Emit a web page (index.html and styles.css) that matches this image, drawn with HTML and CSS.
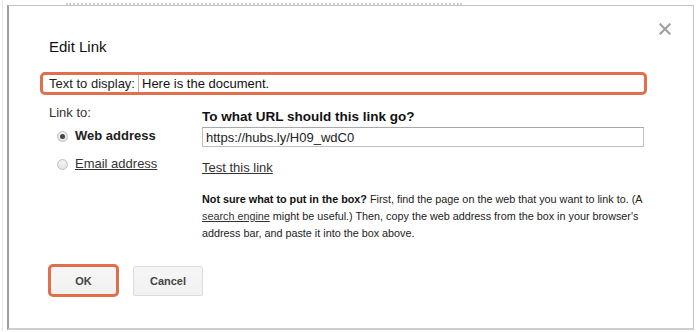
FILE: index.html
```html
<!DOCTYPE html>
<html>
<head>
<meta charset="utf-8">
<link rel="stylesheet" href="styles.css">
</head>
<body>
<div class="page">
  <div class="peek"><span class="peek-line"></span></div>
  <div class="dialog">
    <span class="close"><svg width="12" height="12" viewBox="0 0 12 12"><path d="M1.5 1.5 L10.5 10.5 M10.5 1.5 L1.5 10.5" stroke="#a0a0a0" stroke-width="2.2" stroke-linecap="square"/></svg></span>
    <div class="title">Edit Link</div>
    <div class="display-row">
      <span class="display-label">Text to display:</span>
      <span class="display-input">Here is the document.</span>
    </div>
    <div class="link-body">
      <div class="left-col">
        <div class="linkto">Link to:</div>
        <div class="radio-row first"><span class="radio checked"></span><span class="opt-bold">Web address</span></div>
        <div class="radio-row"><span class="radio"></span><span class="opt-link">Email address</span></div>
      </div>
      <div class="right-col">
        <div class="heading">To what URL should this link go?</div>
        <div class="url-input">https://hubs.ly/H09_wdC0</div>
        <div class="test"><span class="ulink">Test this link</span></div>
        <p class="help"><b>Not sure what to put in the box?</b> First, find the page on the web that you want to link to. (A<br><span class="ulink">search engine</span> might be useful.) Then, copy the web address from the box in your browser's<br>address bar, and paste it into the box above.</p>
      </div>
    </div>
    <div class="buttons">
      <span class="btn ok">OK</span>
      <span class="btn cancel">Cancel</span>
    </div>
  </div>
</div>
</body>
</html>
```

FILE: styles.css
```css
html, body {
  margin: 0;
  padding: 0;
  background: #fff;
}
body {
  font-family: "Liberation Sans", Arial, sans-serif;
  color: #222;
  width: 698px;
  height: 332px;
  overflow: hidden;
}
.page {
  margin-left: 2px;
  border-left: 1px solid #e4e4e4;
  padding-left: 4px;
  height: 331px;
}
.peek {
  height: 5px;
  padding-left: 59px;
  box-sizing: border-box;
  padding-top: 3px;
}
.peek-line {
  display: block;
  width: 396px;
  border-bottom: 2px dotted #d2d2d2;
}
.dialog {
  position: relative;
  box-sizing: border-box;
  width: 687px;
  height: 325px;
  border: 1px solid #c4c4c4;
  border-left: 2px solid #9f9f9f;
  border-bottom: 2px solid #cfcfcf;
  background: #fff;
  padding: 32px 0 0 40px;
}
.close {
  position: absolute;
  top: 17px;
  right: 22px;
  width: 12px;
  height: 12px;
  display: block;
}
.close svg { display: block; }
.title {
  font-size: 15px;
  line-height: 18px;
  color: #111;
}
.display-row {
  display: flex;
  align-items: center;
  box-sizing: border-box;
  margin: 16px 0 0 -9px;
  width: 607px;
  height: 23px;
  border: 3px solid #e0704b;
  border-radius: 5px;
  padding-left: 6px;
  font-size: 13px;
  line-height: 17px;
}
.display-label {
  color: #222;
  width: 89px;
  flex: none;
}
.display-input {
  flex: 1;
  border-left: 1px solid #b9b9b9;
  padding-left: 3px;
  height: 17px;
  color: #111;
}
.link-body {
  display: flex;
  margin-top: 10px;
  font-size: 13px;
  line-height: 16px;
}
.left-col {
  width: 153px;
  flex: none;
}
.linkto {
  color: #333;
}
.radio-row {
  display: flex;
  align-items: center;
  height: 16px;
  margin-top: 12px;
  padding-left: 8px;
}
.radio-row.first {
  margin-top: 7px;
}
.radio {
  box-sizing: border-box;
  width: 11px;
  height: 11px;
  border-radius: 50%;
  border: 1px solid #c2c2c2;
  background: radial-gradient(circle at 50% 35%, #f4f4f4, #dcdcdc);
  margin-right: 7px;
  position: relative;
  flex: none;
}
.radio.checked::after {
  content: "";
  position: absolute;
  left: 2px;
  top: 2px;
  width: 5px;
  height: 5px;
  border-radius: 50%;
  background: #444;
}
.opt-bold {
  font-weight: bold;
  color: #222;
}
.opt-link {
  text-decoration: underline;
  color: #333;
}
.right-col {
  flex: 1;
  margin-top: 4px;
}
.heading {
  font-weight: bold;
  font-size: 13.5px;
  color: #111;
}
.url-input {
  box-sizing: border-box;
  margin-top: 2px;
  width: 442px;
  height: 20px;
  border: 1px solid #c0c0c0;
  border-top-color: #a9a9a9;
  padding: 1px 3px 0;
  line-height: 17px;
  color: #222;
}
.test {
  margin-top: 13px;
}
.ulink {
  text-decoration: underline;
  color: #333;
}
.help {
  margin: 15px 0 0;
  font-size: 10.8px;
  line-height: 17px;
  color: #222;
  white-space: nowrap;
}
.help b {
  color: #111;
}
.buttons {
  display: flex;
  align-items: center;
  gap: 14px;
  margin-top: 22px;
  margin-left: -1px;
}
.btn {
  box-sizing: border-box;
  display: flex;
  align-items: center;
  justify-content: center;
  width: 70px;
  height: 30px;
  border: 1px solid #dcdcdc;
  border-radius: 2px;
  background: linear-gradient(#f6f6f6, #f1f1f1);
  font-size: 11px;
  font-weight: bold;
  color: #444;
}
.btn.ok {
  width: 71px;
  height: 33px;
  border: 3px solid #e0704b;
  border-radius: 5px;
}
```
